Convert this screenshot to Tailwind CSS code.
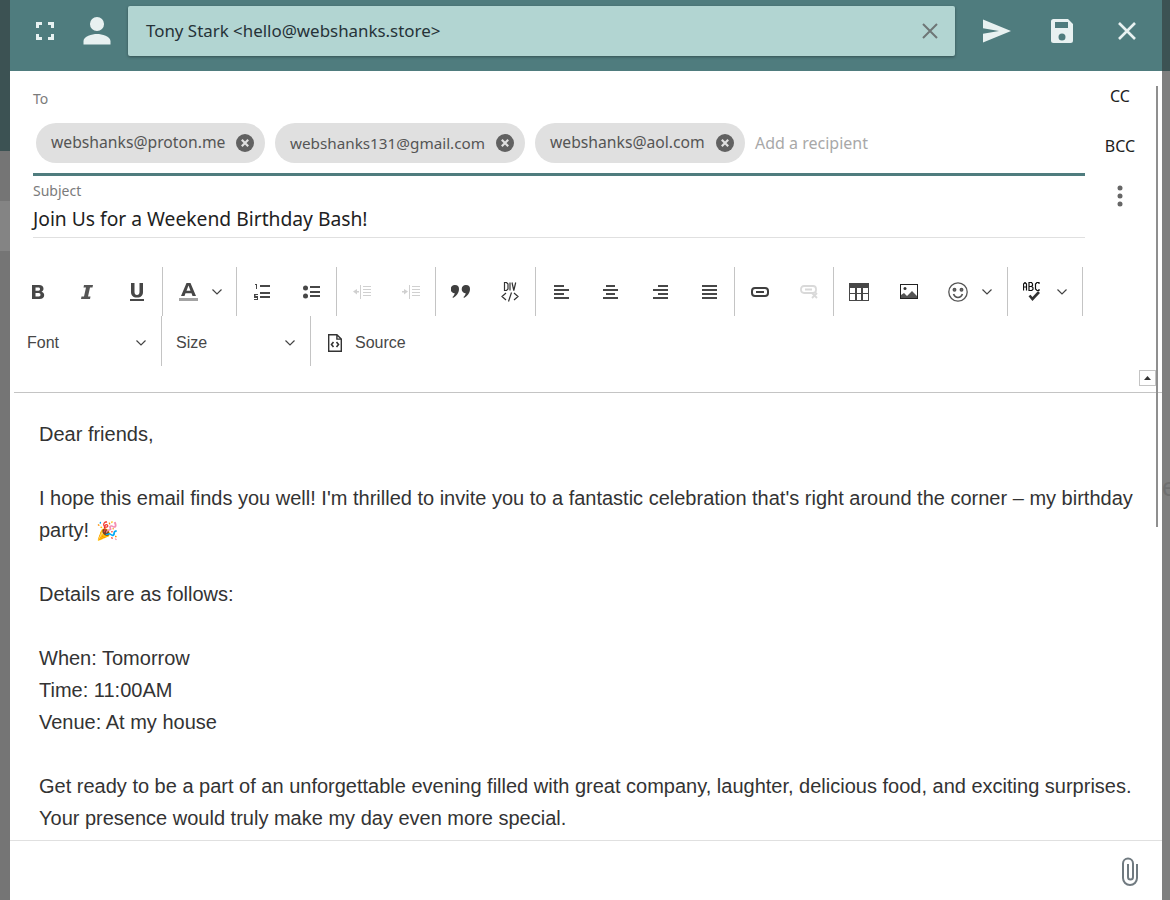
<!DOCTYPE html>
<html>
<head>
<meta charset="utf-8">
<script src="https://cdn.jsdelivr.net/npm/@tailwindcss/browser@4"></script>
</head>
<body class="bg-[#7f7f7f]">
<div class="relative flex h-[900px] w-[1170px] overflow-hidden font-['Noto_Sans',sans-serif]">
  <!-- backdrop left -->
  <div class="flex w-[10px] flex-none flex-col">
    <div class="h-[151px] bg-[#3c5253]"></div>
    <div class="h-[50px] bg-[#757575]"></div>
    <div class="h-[50px] bg-[#848484]"></div>
    <div class="flex-1 bg-[#757575]"></div>
  </div>
  <!-- dialog -->
  <div class="flex w-[1152px] flex-none flex-col bg-white">
    <header class="flex h-[71px] flex-none items-center bg-[#4f7c7e] pb-[9px]">
      <svg class="ml-[25px] h-[20px] w-[20px] flex-none" viewBox="0 0 20 20" fill="none" stroke="#e8f1f1" stroke-width="3"><path d="M2.500 7V2.500H7M13 2.500h4.500V7M17.500 13v4.500H13M7 17.500H2.500V13"/></svg>
      <svg class="ml-[24px] h-[36px] w-[36px] flex-none" viewBox="0 0 24 24" fill="#e8f1f1"><path d="M12 12a4.700 4.700 0 1 0 0-9.400 4.700 4.700 0 0 0 0 9.400zm0 2c-3.300 0-9 1.600-9 4.700V21h18v-2.300c0-3.100-5.700-4.700-9-4.700z"/></svg>
      <div class="ml-[13px] flex h-[50px] w-[827px] flex-none items-center rounded-[2px] bg-[#b2d5d2] pl-[18px] pr-[16px] shadow-[0_1px_3px_rgba(0,0,0,0.35)]">
        <span class="flex-1 text-[16.900px] text-[#263238]">Tony Stark &lt;hello@webshanks.store&gt;</span>
        <svg class="h-[18px] w-[18px]" viewBox="0 0 18 18" stroke="#6e7676" stroke-width="2"><path d="M2 2l14 14M16 2L2 16"/></svg>
      </div>
      <svg class="ml-[27px] h-[26px] w-[30px] flex-none" viewBox="0 0 30 26" fill="#e8f1f1"><path d="M1 1.500l28 11.500L1 24.500v-8.800L17 13 1 10.300z"/></svg>
      <svg class="ml-[39px] h-[24px] w-[22px] flex-none" viewBox="0 0 22 24" fill="#e8f1f1"><path fill-rule="evenodd" d="M3 0h14l5 5v16.500a2.500 2.500 0 0 1-2.500 2.500h-17A2.500 2.500 0 0 1 0 21.500v-19A2.500 2.500 0 0 1 2.500 0zM4 3v6h13V3zm7 11.500a3.500 3.500 0 1 0 0 7 3.500 3.500 0 0 0 0-7z"/></svg>
      <svg class="ml-[44px] h-[20px] w-[20px] flex-none" viewBox="0 0 20 20" stroke="#e8f1f1" stroke-width="2.600"><path d="M2 2l16 16M18 2L2 18"/></svg>
    </header>

    <div class="flex flex-none">
      <div class="ml-[23px] w-[1052px] flex-none">
        <div class="h-[40px] pt-[19px] text-[14px] leading-[18px] text-[#7b7b7b]">To</div>
        <div class="flex h-[65px] items-start gap-[10px] border-b-[3px] border-[#4f7c7e] pl-[3px] pt-[12px]">
          <span class="flex h-[40px] w-[229px] items-center justify-between rounded-full bg-[#e0e0e0] pl-[15px] pr-[11px] text-[15.700px] text-[#555]">webshanks@proton.me<svg class="h-[18px] w-[18px]" viewBox="0 0 18 18"><circle cx="9" cy="9" r="9" fill="#616161"/><path d="M5.800 5.800l6.400 6.400M12.200 5.800l-6.400 6.400" stroke="#e0e0e0" stroke-width="2.200"/></svg></span>
          <span class="flex h-[40px] w-[250px] items-center justify-between rounded-full bg-[#e0e0e0] pl-[15px] pr-[11px] text-[15.250px] text-[#555]">webshanks131@gmail.com<svg class="h-[18px] w-[18px]" viewBox="0 0 18 18"><circle cx="9" cy="9" r="9" fill="#616161"/><path d="M5.800 5.800l6.400 6.400M12.200 5.800l-6.400 6.400" stroke="#e0e0e0" stroke-width="2.200"/></svg></span>
          <span class="flex h-[40px] w-[210px] items-center justify-between rounded-full bg-[#e0e0e0] pl-[15px] pr-[11px] text-[15.700px] text-[#555]">webshanks@aol.com<svg class="h-[18px] w-[18px]" viewBox="0 0 18 18"><circle cx="9" cy="9" r="9" fill="#616161"/><path d="M5.800 5.800l6.400 6.400M12.200 5.800l-6.400 6.400" stroke="#e0e0e0" stroke-width="2.200"/></svg></span>
          <span class="flex h-[40px] items-center text-[16px] text-[#a8a8a8]">Add a recipient</span>
        </div>
        <div class="h-[62px] border-b border-[#e0e0e0]">
          <div class="pt-[6px] text-[14px] leading-[18px] text-[#7b7b7b]">Subject</div>
          <div class="pt-[6px] text-[19.250px] leading-[26px] text-[#212121]">Join Us for a Weekend Birthday Bash!</div>
        </div>
      </div>
      <div class="flex w-[70px] flex-none flex-col items-center">
        <div class="mt-[13px] text-[16px] leading-[24px] text-[#212121]">CC</div>
        <div class="mt-[26px] text-[16px] leading-[24px] text-[#212121]">BCC</div>
        <svg class="mt-[27px] h-[22px] w-[6px]" viewBox="0 0 6 22" fill="#666"><circle cx="3" cy="3" r="2.500"/><circle cx="3" cy="11" r="2.500"/><circle cx="3" cy="19" r="2.500"/></svg>
      </div>
    </div>

    <!-- toolbar -->
    <div class="relative ml-[4px] h-[155px] flex-none border-b border-[#c4c4c4] font-['Liberation_Sans',sans-serif]">
      <div class="mt-[29px] flex h-[49px] items-center">
        <!-- B I U -->
        <div class="flex h-[49px] items-center border-r border-[#c4c4c4]">
          <span class="flex w-[48px] justify-center"><svg class="h-[16px] w-[14px]" viewBox="0 0 14 16" fill="#474747"><path fill-rule="evenodd" d="M1 1h7c3 0 4.500 1.500 4.500 3.700 0 1.400-.8 2.600-2 3 1.700.4 2.700 1.700 2.700 3.400C13.200 13.600 11.500 15 8.500 15H1zm3.500 2.500v3.200h3c1 0 1.500-.6 1.500-1.600s-.5-1.600-1.500-1.600zm0 5.500v3.500h3.300c1.100 0 1.700-.7 1.700-1.700 0-1.100-.6-1.800-1.700-1.800z"/></svg></span>
          <span class="flex w-[50px] justify-center"><svg class="h-[16px] w-[12px]" viewBox="0 0 12 16" fill="#555"><path d="M3 1h9l-.5 2.500H9L7 12.500h2.500L9 15H0l.5-2.500H3L5 3.500H2.500z"/></svg></span>
          <span class="flex w-[50px] justify-center"><svg class="h-[18px] w-[14px]" viewBox="0 0 14 18" fill="#474747"><path d="M1 0h3.500v9c0 2 1 3 2.500 3s2.500-1 2.500-3V0H13v9c0 3.500-2 5.500-6 5.500S1 12.500 1 9zM0 16h14v2H0z"/></svg></span>
        </div>
        <!-- colour -->
        <div class="flex h-[49px] w-[74px] items-center border-r border-[#c4c4c4] pl-[16px]">
          <svg class="h-[18px] w-[19px]" viewBox="0 0 19 18"><path d="M7.500 0h4L17 13h-3.500l-1-2.700h-6l-1 2.700H2zM7.500 7.700h4L9.500 2.500z" fill="#474747" fill-rule="evenodd"/><rect y="15" width="19" height="3" fill="#a3a3a3"/></svg>
          <svg class="ml-[14px] h-[6px] w-[10px]" viewBox="0 0 10 6" fill="none" stroke="#444" stroke-width="1.200"><path d="M.5.500L5 5 9.500.5"/></svg>
        </div>
        <!-- lists -->
        <div class="flex h-[49px] w-[100px] items-center border-r border-[#c4c4c4]">
          <span class="flex w-[50px] justify-center"><svg class="h-[16px] w-[16px]" viewBox="0 0 16 16" fill="#474747"><path d="M1 0h2v5H2V1H1zM0 10h4v1H1.500v1H4v4H0v-1h3v-1H0zM6 1h10v2H6zM6 8h10v2H6zM6 12h10v2H6z"/></svg></span>
          <span class="flex w-[50px] justify-center"><svg class="h-[14px] w-[17px]" viewBox="0 0 17 14" fill="#474747"><circle cx="2.500" cy="3" r="2.500"/><circle cx="2.500" cy="11" r="2.500"/><path d="M7 1h10v2H7zM7 6h10v2H7zM7 10h10v2H7z"/></svg></span>
        </div>
        <!-- indent -->
        <div class="flex h-[49px] w-[99px] items-center border-r border-[#c4c4c4]">
          <span class="flex w-[50px] justify-center opacity-25"><svg class="h-[14px] w-[18px]" viewBox="0 0 18 14" fill="#474747"><path d="M7 0h1v14H7zM10 1h8v1h-8zM10 4h8v1h-8zM10 7h8v1h-8zM10 10h8v1h-8zM0 6.500L4 4v2h2v1.500H4v2z"/></svg></span>
          <span class="flex w-[49px] justify-center opacity-25"><svg class="h-[14px] w-[18px]" viewBox="0 0 18 14" fill="#474747"><path d="M7 0h1v14H7zM10 1h8v1h-8zM10 4h8v1h-8zM10 7h8v1h-8zM10 10h8v1h-8zM6 6.500L2 4v2H0v1.500h2v2z"/></svg></span>
        </div>
        <!-- quote / div -->
        <div class="flex h-[49px] w-[100px] items-center border-r border-[#c4c4c4]">
          <span class="flex w-[50px] justify-center"><svg class="h-[13px] w-[19px]" viewBox="0 0 19 13" fill="#3f3f3f"><path d="M4 0a4 4 0 0 1 4 4c0 4-3 7.500-6 9l-.5-1c1.200-1 2-2.200 2.200-3.700A4 4 0 0 1 4 0zM15 0a4 4 0 0 1 4 4c0 4-3 7.500-6 9l-.5-1c1.200-1 2-2.200 2.200-3.700A4 4 0 0 1 15 0z"/></svg></span>
          <span class="flex w-[50px] justify-center"><svg class="h-[20px] w-[18px]" viewBox="0 0 18 20" fill="none" stroke="#333" stroke-width="1.200"><path d="M3.500 .5h2l1.500 1.500v5l-1.500 1.500h-2zM9 .5v8M11 .5l1.800 8L14.700 .5M5 11l-4 3.500 4 3.500M13 11l4 3.500-4 3.500M10.500 10.500l-3 9"/></svg></span>
        </div>
        <!-- align -->
        <div class="flex h-[49px] w-[199px] items-center border-r border-[#c4c4c4]">
          <span class="flex w-[50px] justify-center"><svg class="h-[14px] w-[15px]" viewBox="0 0 15 14" fill="#474747"><path d="M0 0h10v2H0zM0 4h15v2H0zM0 8h10v2H0zM0 12h15v2H0z"/></svg></span>
          <span class="flex w-[49px] justify-center"><svg class="h-[14px] w-[15px]" viewBox="0 0 15 14" fill="#474747"><path d="M3 0h9v2H3zM0 4h15v2H0zM3 8h9v2H3zM0 12h15v2H0z"/></svg></span>
          <span class="flex w-[50px] justify-center"><svg class="h-[14px] w-[15px]" viewBox="0 0 15 14" fill="#474747"><path d="M5 0h10v2H5zM0 4h15v2H0zM5 8h10v2H5zM0 12h15v2H0z"/></svg></span>
          <span class="flex w-[49px] justify-center"><svg class="h-[14px] w-[15px]" viewBox="0 0 15 14" fill="#474747"><path d="M0 0h15v2H0zM0 4h15v2H0zM0 8h15v2H0zM0 12h15v2H0z"/></svg></span>
        </div>
        <!-- link -->
        <div class="flex h-[49px] w-[99px] items-center border-r border-[#c4c4c4]">
          <span class="flex w-[50px] justify-center"><svg class="h-[10px] w-[18px]" viewBox="0 0 18 10" fill="none" stroke="#3f3f3f" stroke-width="2"><rect x="1" y="1" width="16" height="8" rx="3"/><path d="M5 5h8"/></svg></span>
          <span class="flex w-[49px] justify-center opacity-20"><svg class="h-[14px] w-[18px]" viewBox="0 0 18 14" fill="none" stroke="#474747" stroke-width="1.800"><rect x="1" y="1" width="15" height="7" rx="3"/><path d="M5 4.500h7M12 8l5 5M17 8l-5 5"/></svg></span>
        </div>
        <!-- insert -->
        <div class="flex h-[49px] w-[174px] items-center border-r border-[#c4c4c4]">
          <span class="flex w-[50px] justify-center"><svg class="h-[18px] w-[20px]" viewBox="0 0 20 18" fill="#474747"><path fill-rule="evenodd" d="M0 0h20v18H0zM1 5v5h5V5zm7 0v5h4V5zm6 0v5h5V5zM1 11v6h5v-6zm7 0v6h4v-6zm6 0v6h5v-6z"/></svg></span>
          <span class="flex w-[50px] justify-center"><svg class="h-[15px] w-[18px]" viewBox="0 0 18 15"><rect width="18" height="15" fill="#222"/><rect x="1" y="1" width="16" height="13" fill="#fff"/><circle cx="5" cy="4.500" r="1.500" fill="#333"/><path d="M1 14v-3l3-2 3 3 5-5 5 5v2z" fill="#555"/></svg></span>
          <span class="flex w-[74px] items-center pl-[15px]">
            <svg class="h-[20px] w-[20px]" viewBox="0 0 20 20" fill="none" stroke="#555" stroke-width="1.300"><circle cx="10" cy="10" r="9.200"/><circle cx="6.500" cy="7.800" r="1.300" fill="#777"/><circle cx="13.500" cy="7.800" r="1.300" fill="#777"/><path d="M5.500 12c1 2.500 2.700 3.500 4.500 3.500s3.500-1 4.500-3.500" stroke-width="1.600"/></svg>
            <svg class="ml-[14px] h-[6px] w-[10px]" viewBox="0 0 10 6" fill="none" stroke="#444" stroke-width="1.200"><path d="M.5.500L5 5 9.500.5"/></svg>
          </span>
        </div>
        <!-- spell -->
        <div class="flex h-[49px] w-[75px] items-center border-r border-[#c4c4c4] pl-[15px]">
          <svg class="h-[19px] w-[19px]" viewBox="0 0 19 19" fill="none" stroke="#111" stroke-width="1.200"><path d="M.5 8.500V2L2 .5 3.500 2v6.500M.5 5h3M6 .5h2.500L9.500 2v1.500L8.500 4.500H6zM6 4.500h2.800L10 5.700v1.600L8.800 8.500H6zM6 .5v8M16 2V.5h-2L12.500 2v5L14 8.500h2V7"/><path d="M6.500 13.500l3 3.500L16 10" stroke="#333" stroke-width="2.600"/></svg>
          <svg class="ml-[15px] h-[6px] w-[10px]" viewBox="0 0 10 6" fill="none" stroke="#444" stroke-width="1.200"><path d="M.5.500L5 5 9.500.5"/></svg>
        </div>
      </div>
      <div class="flex h-[50px] items-center">
        <div class="flex h-[50px] w-[148px] items-center justify-between border-r border-[#c4c4c4] pl-[13px] pr-[15px] pt-[4px] text-[16px] text-[#474747]">Font<svg class="h-[6px] w-[10px]" viewBox="0 0 10 6" fill="none" stroke="#444" stroke-width="1.200"><path d="M.5.500L5 5 9.500.5"/></svg></div>
        <div class="flex h-[50px] w-[149px] items-center justify-between border-r border-[#c4c4c4] pl-[14px] pr-[15px] pt-[4px] text-[16px] text-[#474747]">Size<svg class="h-[6px] w-[10px]" viewBox="0 0 10 6" fill="none" stroke="#444" stroke-width="1.200"><path d="M.5.500L5 5 9.500.5"/></svg></div>
        <div class="flex items-center pl-[17px] pt-[4px] text-[16px] text-[#474747]">
          <svg class="h-[18px] w-[14px]" viewBox="0 0 14 18" fill="none" stroke="#333" stroke-width="1.400"><path d="M.7.700h8.200l4.400 4.400v12.200H.7zM8.900.7v4.400h4.400"/><path d="M5.500 8l-2 2.500 2 2.500M8.500 8l2 2.500-2 2.500" stroke-width="1.600"/></svg>
          <span class="ml-[13px]">Source</span>
        </div>
      </div>
      <span class="absolute bottom-[6px] right-[6px] flex h-[16px] w-[17px] items-center justify-center border border-[#c4c4c4] bg-white"><svg class="h-[4px] w-[7px]" viewBox="0 0 7 4" fill="#333"><path d="M3.500 0L7 4H0z"/></svg></span>
    </div>

    <!-- body -->
    <div class="h-[448px] flex-none overflow-hidden border-b border-[#e0e0e0] pl-[29px] pr-[20px] pt-[25px] font-['Liberation_Sans',sans-serif] text-[20px] leading-[32px] text-[#333]">
      <p>Dear friends,</p>
      <p class="mt-[32px]">I hope this email finds you well! I'm thrilled to invite you to a fantastic celebration that's right around the corner – my birthday party! <span class="ml-[1px] text-[18px] leading-[0]">🎉</span></p>
      <p class="mt-[32px]">Details are as follows:</p>
      <p class="mt-[32px]">When: Tomorrow<br>Time: 11:00AM<br>Venue: At my house</p>
      <p class="mt-[32px]">Get ready to be a part of an unforgettable evening filled with great company, laughter, delicious food, and exciting surprises. Your presence would truly make my day even more special.</p>
    </div>

    <!-- footer -->
    <div class="flex flex-1 items-start justify-end pr-[23px] pt-[15px]">
      <svg class="h-[30px] w-[18px]" viewBox="0 0 18 30" fill="none" stroke="#707a80" stroke-width="2"><path d="M16 8v14a7 7 0 0 1-14 0V7.500a5 5 0 0 1 10 0V21a2.500 2.500 0 0 1-5 0V8"/></svg>
    </div>
  </div>
  <!-- backdrop right -->
  <div class="flex w-[8px] flex-none flex-col overflow-hidden">
    <div class="h-[71px] flex-none bg-[#3c5253]"></div>
    <div class="flex-1 bg-[#7f7f7f] pt-[400px] font-['Liberation_Sans',sans-serif] text-[26px] leading-[32px] text-[#6f6f6f]">e</div>
  </div>
  <!-- scrollbar thumb over the dialog -->
  <div class="absolute left-[1156px] top-[86px] h-[441px] w-[2px] bg-[#8f8f8f]"></div>
</div>
</body>
</html>
